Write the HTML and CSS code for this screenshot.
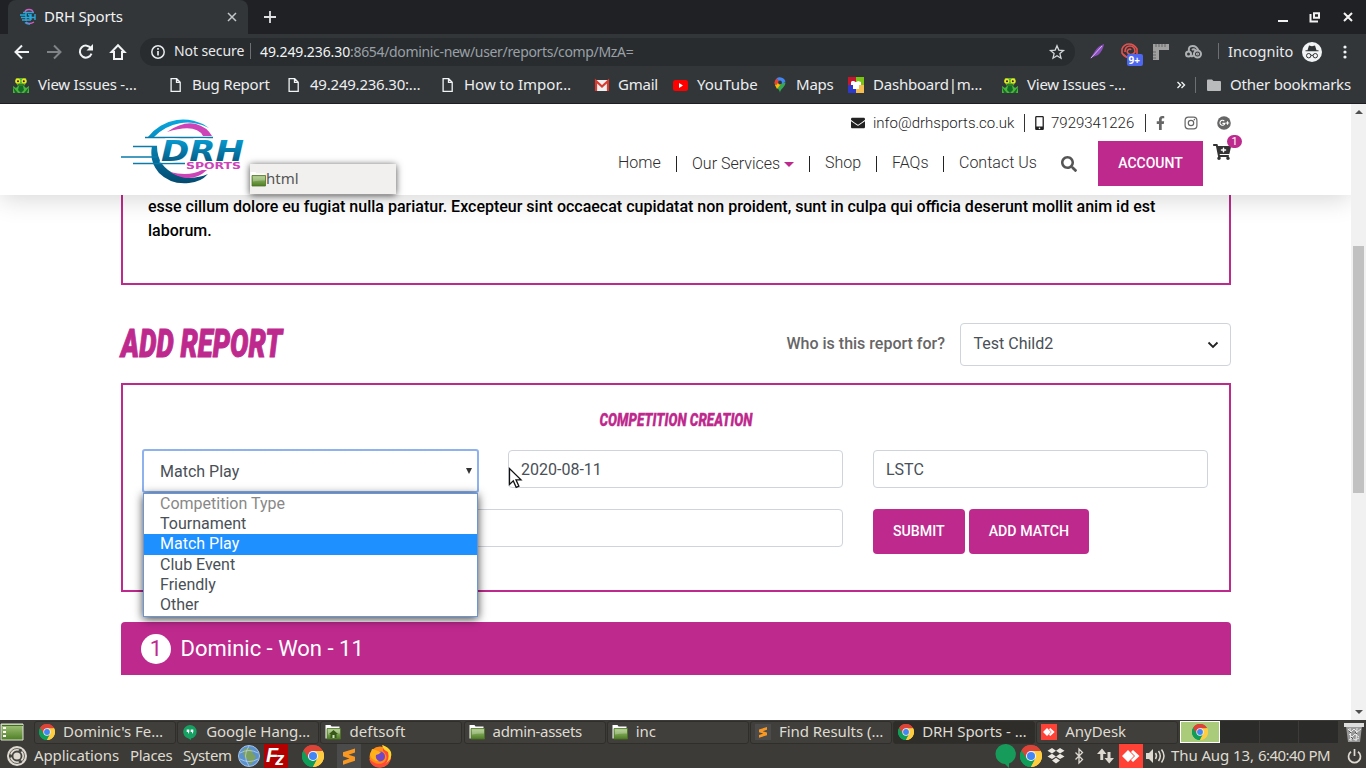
FILE: index.html
```html
<!DOCTYPE html>
<html lang="en">
<head>
<meta charset="utf-8">
<title>DRH Sports</title>
<link rel="stylesheet" href="styles.css">
</head>
<body>
<svg class="defs" width="0" height="0">
  <defs>
    <linearGradient id="blue" x1="0" y1="0" x2="0" y2="1"><stop offset="0" stop-color="#08a8e0"/><stop offset="1" stop-color="#05496f"/></linearGradient>
    <linearGradient id="green" x1="0" y1="0" x2="0" y2="1"><stop offset="0" stop-color="#a5c77c"/><stop offset="1" stop-color="#4e7d25"/></linearGradient>
  </defs>
  <symbol id="chrome" viewBox="0 0 24 24">
    <path fill="#db4437" d="M12 12 1.6 6A12 12 0 0 1 22.4 6Z"/>
    <path fill="#0f9d58" d="M12 12v12A12 12 0 0 1 1.6 6Z"/>
    <path fill="#ffcd40" d="M12 12 22.4 6A12 12 0 0 1 12 24Z"/>
    <path fill="#db4437" d="M12 6.5h10.6A12 12 0 0 0 1.6 6l5.6 9.2Z"/>
    <path fill="#0f9d58" d="M1.6 6 7.2 15l9.6 0L12 24A12 12 0 0 1 1.6 6Z"/>
    <path fill="#ffcd40" d="M12 6.5h10.7A12 12 0 0 1 12 24l4.8-9Z"/>
    <circle cx="12" cy="12" r="5.5" fill="#f4f4f4"/><circle cx="12" cy="12" r="4.4" fill="#4285f4"/>
  </symbol>
  <symbol id="page" viewBox="0 0 16 16"><path d="M4.100 1.700h5.600l3.500 3.500v9.100H4.100ZM9.500 1.900v3.500h3.500" fill="none" stroke="#f1f3f4" stroke-width="1.300"/></symbol>
  <symbol id="bug" viewBox="0 0 16 16">
    <path fill="#4bb43c" d="M3 1h10l1 4-3 4 2 2 3-2v7H0V9l3 2 2-2-3-4Z"/><path fill="#146b25" d="m0 10 5 6H2Zm16 0-5 6h3ZM6 9l4 0 1 4-3 3-3-3Z"/>
    <circle cx="4.800" cy="4" r="2.500" fill="#ffe21a"/><circle cx="11" cy="4" r="2.500" fill="#ffe21a"/><circle cx="5" cy="4.200" r="1" fill="#222"/><circle cx="10.800" cy="4.200" r="1" fill="#222"/><path d="M5 8h6" stroke="#1e4316"/>
  </symbol>
  <symbol id="folder" viewBox="0 0 16 16"><path fill="#fff" d="M.5 1h5l1 1.500h8v12H.5Z"/><path fill="url(#green)" stroke="#4c7427" stroke-width=".8" d="M2 4.500h13.500v10.500H2Z"/><path d="M3 5.500h12v4q-5-.5-12 1Z" fill="#fff" opacity=".25"/></symbol>
  <symbol id="sublime" viewBox="0 0 16 16"><path fill="#4b4b4b" d="M0 0h16v16H0Z"/><path fill="#f89822" d="m4 5.500 8-2.500v2.700L7.700 7.200l4.300 1.300v2.700l-8 2.600v-2.700l4.300-1.500L4 8.200Z"/></symbol>
  <symbol id="anydesk" viewBox="0 0 24 24"><path fill="#ff4136" d="M0 0h24v24H0Z"/><path fill="#fff" d="m9 6 6 6-6 6-6-6Zm5 0 6.500 6L14 18l-2-2 4-4-4-4Z"/></symbol>
</svg>

<div class="tabstrip">
  <div class="tab">
    <svg width="16" height="16" viewBox="0 0 16 16"><path d="M5 4q0-3.500 4-3.500T13 4M6 13q3 3 8 0" fill="none" stroke="#d05fc4" stroke-width="1.400"/><path d="M3 3.500h11M0 6h6M1 8.500h14M2 11h9M5 13.500q2 2 5 1.500M6 4v8M8 5.500l2 .5v4M11 5v6M15 5v6" stroke="#27a9db" stroke-width="1.400" fill="none"/></svg>
    <span class="tab-title">DRH Sports</span>
    <svg class="tab-x" width="10" height="10" viewBox="0 0 10 10"><path d="m1 1 8 8M9 1 1 9" stroke="#c4c7ca" stroke-width="1.500"/></svg>
  </div>
  <svg class="plus" width="14" height="14" viewBox="0 0 14 14"><path d="M7 1v12M1 7h12" stroke="#e0e1e3" stroke-width="1.800"/></svg>
  <svg class="wm" width="78" height="14" viewBox="0 0 78 14"><path d="M1 11h10M33.500 4v7.500H41M37 3.200h5v4.600h-5zM67 3l8 8M75 3l-8 8" fill="none" stroke="#f2f2f2" stroke-width="2"/></svg>
</div>

<div class="toolbar">
  <svg class="navicons" width="114" height="20" viewBox="0 0 114 20" fill="none" stroke="#f1f3f4" stroke-width="2">
    <path d="M16 10H3M9 3.500 2.500 10 9 16.500"/>
    <path stroke="#808387" d="M34 10h13M41 3.500l6.500 6.500-6.500 6.500"/>
    <path d="M78 6.500A6 6 0 1 0 78.500 11.700"/><path d="M73.500 8.600h6.500V2Z" fill="#f1f3f4" stroke="none"/>
    <path d="M98.500 10h2.500v7h8v-7h2.500L105 3.300Z"/>
  </svg>
  <div class="omnibox">
    <svg width="14" height="14" viewBox="0 0 14 14" fill="none" stroke="#e8eaed"><circle cx="7" cy="7" r="6.200" stroke-width="1.500"/><path d="M7 6v4.500M7 3v1.700" stroke-width="1.700"/></svg>
    <span class="secure">Not secure</span>
    <span class="url"><b>49.249.236.30</b>:8654/dominic-new/user/reports/comp/MzA=</span>
    <svg class="star" width="16" height="16" viewBox="0 0 16 16"><path d="m8 1.800 1.800 4.300 4.700.4-3.600 3.100 1.100 4.600L8 11.700l-4 2.500 1.100-4.600L1.500 6.500l4.700-.4Z" fill="none" stroke="#d5d7da" stroke-width="1.300"/></svg>
  </div>
  <svg class="ext" width="118" height="24" viewBox="0 0 118 24">
    <path d="M0 19 5 11q3-5 9-7-1 7-6 11l-5 2Z" fill="#8a4fbd"/><path d="m1 18 11-12" stroke="#d9b6ef"/>
    <g fill="none" stroke="#e3524f" stroke-width="1.600"><path d="M32 9q2-5 7-5 5 0 8 5v7q-3 2-6 2-6 0-9-5Z"/><path d="M35 12q0-6 5-6t5 6q-3 4-6 2t-1-4 3 0M33 14l5 4"/></g>
    <rect x="37" y="14" width="16" height="12" rx="2" fill="#4d67f0"/><text x="38.500" y="23.500" class="badge-text">9+</text>
    <path d="M63 4h16v6h-10v10h-6Z" fill="#a0a0a0"/><path d="M66 4v3m3-3v3m3-3v3m3-3v3M63 12h3m-3 3h3m-3 3h3" stroke="#666"/>
    <g fill="none" stroke="#aeb0b2" stroke-width="2"><path d="M99 11q-1-5 3.500-5t6 5"/><path d="M102 10q2-2 4 1"/><circle cx="98.500" cy="14" r="2.500"/><path d="M101 16q3 1 3-3"/><circle cx="107.500" cy="14" r="3.500"/><circle cx="107.500" cy="14" r=".6"/></g>
  </svg>
  <span class="incog">Incognito</span>
  <svg class="incogicon" width="20" height="20" viewBox="0 0 20 20"><circle cx="10" cy="10" r="10" fill="#f1f3f4"/><path d="M3.500 9.300h13V8.200h-2L13 3.500l-3 .7-3-.7-1.500 4.700h-2Z" fill="#303437"/><path d="M9 13.500q1-.8 2 0" stroke="#303437" fill="none"/><circle cx="6.700" cy="13.700" r="2.200" fill="none" stroke="#303437"/><circle cx="13.300" cy="13.700" r="2.200" fill="none" stroke="#303437"/></svg>
  <svg width="4" height="14" viewBox="0 0 4 14" fill="#f1f3f4"><circle cx="2" cy="2" r="1.600"/><circle cx="2" cy="7" r="1.600"/><circle cx="2" cy="12" r="1.600"/></svg>
</div>

<div class="bookmarks">
  <div class="bm"><svg><use href="#bug"/></svg><span>View Issues -…</span></div>
  <div class="bm"><svg><use href="#page"/></svg><span>Bug Report</span></div>
  <div class="bm"><svg><use href="#page"/></svg><span>49.249.236.30:…</span></div>
  <div class="bm"><svg><use href="#page"/></svg><span class="wide">How to Impor…</span></div>
  <div class="bm"><svg viewBox="0 0 16 16"><path fill="#eee" d="M2 3h14v11H2Z"/><path d="M3 14V4l6 5.500L15 4v10" fill="none" stroke="#d93a30" stroke-width="2.200"/></svg><span>Gmail</span></div>
  <div class="bm"><svg viewBox="0 0 16 16"><rect x="1" y="3" width="15" height="11" rx="2.500" fill="#f00"/><path d="m7 6 4 2.500L7 11Z" fill="#fff"/></svg><span class="wide">YouTube</span></div>
  <div class="bm"><svg viewBox="0 0 16 16"><path fill="#34a853" d="M9 16c0-4-5.500-6-5.500-10.500h11C14.500 10 9 12 9 16Z"/><path fill="#fbbc04" d="m4 8 4-4 2 3-4 5Z"/><path fill="#ea4335" d="M3.500 6q0-3 2-4.500L8.500 4 5 8.500Z"/><path fill="#4285f4" d="M5.500 1.500Q7 0 9 .2q4.200.3 5.500 4.300L11 7 8 4Z"/><circle cx="9" cy="5.500" r="1.900" fill="#303437"/></svg><span>Maps</span></div>
  <div class="bm"><svg viewBox="0 0 16 16"><path fill="#c5162b" d="M0 0h8v8H0Z"/><path fill="#7bc315" d="M8 0h8v8H8Z"/><path fill="#2d39ca" d="M0 8h8v8H0Z"/><path fill="#f5bd52" d="M8 8h8v8H8Z"/><path fill="#fff" d="m4 4 2 0q2 2 4 0l3 1 0 3-2 0v4H5V8L3 8V5Z"/></svg><span>Dashboard|m…</span></div>
  <div class="bm"><svg><use href="#bug"/></svg><span>View Issues -…</span></div>
  <svg class="more" width="9" height="8" viewBox="0 0 9 8"><path d="m.5 1 3 3-3 3M4.500 1l3 3-3 3" fill="none" stroke="#f1f3f4" stroke-width="1.400"/></svg>
  <div class="other"><svg viewBox="0 0 16 16"><path d="M0 3.500q0-1 1-1h4l1.500 1.500H13q1 0 1 1v8q0 1-1 1H1q-1 0-1-1Z" fill="#b9babb"/></svg><span>Other bookmarks</span></div>
</div>

<div class="viewport">
  <div class="site">
    <header class="header">
      <svg class="logo" width="126" height="68" viewBox="0 0 126 68">
        <path d="M27 20A44 44 0 0 1 88 11A46 46 0 0 0 33 20ZM31 29Q28 45 38 56Q50 68 68 66Q80 65 87 57Q70 64 56 58Q36 50 36 29Z" fill="url(#blue)"/>
        <path d="M46 15Q62 4 75 7Q86 10 91 19H82Q75 6 46 15ZM49 55Q68 60 81 53H86Q70 68 49 55Z" fill="#cc43b8"/>
        <path d="M24 20.500h68M12 29.500h24M0 40h36M12 46.500h52" stroke="#0b7ba9" stroke-width="1.600"/>
        <text class="drh" x="40" y="44" textLength="83" lengthAdjust="spacingAndGlyphs" fill="url(#blue)">DRH</text>
        <text class="sports" x="65" y="52.300" textLength="55" lengthAdjust="spacingAndGlyphs">SPORTS</text>
      </svg>
      <div class="head-right">
        <div class="contact">
          <svg class="env" viewBox="0 0 512 512"><path d="M502.300 190.800c3.900-3.100 9.700-.2 9.700 4.700V400c0 26.500-21.500 48-48 48H48c-26.500 0-48-21.500-48-48V195.600c0-5 5.700-7.800 9.700-4.700 22.400 17.400 52.100 39.500 154.100 113.600 21.100 15.400 56.700 47.800 92.200 47.600 35.700.3 72-32.800 92.300-47.600 102-74.100 131.600-96.300 154-113.700zM256 320c23.200.4 56.600-29.200 73.400-41.400 132.700-96.300 142.800-104.700 173.400-128.700 5.800-4.500 9.200-11.500 9.200-18.900v-19c0-26.500-21.500-48-48-48H48c-26.500 0-48 21.500-48 48v19c0 7.400 3.400 14.300 9.200 18.900 30.600 23.900 40.700 32.400 173.400 128.700 16.800 12.200 50.200 41.800 73.400 41.400z"/></svg>
          <span class="mail">info@drhsports.co.uk</span>
          <i class="sep"></i>
          <svg class="mob" viewBox="0 0 320 512"><path d="M272 0H48C21.500 0 0 21.500 0 48v416c0 26.500 21.500 48 48 48h224c26.500 0 48-21.500 48-48V48c0-26.500-21.500-48-48-48zM160 480c-17.700 0-32-14.300-32-32s14.300-32 32-32 32 14.300 32 32-14.300 32-32 32zm112-108c0 6.600-5.400 12-12 12H60c-6.600 0-12-5.400-12-12V60c0-6.600 5.400-12 12-12h200c6.600 0 12 5.400 12 12v312z"/></svg>
          <span class="phone">7929341226</span>
          <i class="sep"></i>
          <svg class="fb" viewBox="0 0 320 512"><path d="M279.140 288l14.220-92.660h-88.910v-60.130c0-25.350 12.420-50.060 52.240-50.060h40.420V6.260S260.430 0 225.360 0c-73.220 0-121.080 44.380-121.080 124.720v70.620H22.890V288h81.390v224h100.170V288z"/></svg>
          <svg class="ig" viewBox="0 0 14 14"><rect x="1.100" y="1.100" width="11.800" height="11.800" rx="3.300" fill="none" stroke="#666" stroke-width="1.200"/><circle cx="7" cy="7" r="2.700" fill="none" stroke="#666" stroke-width="1.200"/><circle cx="10.400" cy="3.600" r=".8"/></svg>
          <svg class="gp" viewBox="0 0 14 14"><circle cx="7" cy="7" r="6.800"/><path d="M7.300 5.100a2.500 2.500 0 1 0 .6 2.300H5.400M8.800 7h3.400M10.500 5.300v3.400" fill="none" stroke="#fff" stroke-width="1.100"/></svg>
        </div>
        <nav class="nav">
          <span class="n1">Home</span><span class="n2">Our Services<i class="caret"></i></span><span class="n3">Shop</span><span class="n4">FAQs</span><span class="n5">Contact Us</span>
          <svg class="search" viewBox="0 0 512 512"><path d="M505 442.700L405.300 343c-4.500-4.500-10.600-7-17-7H372c27.600-35.300 44-79.700 44-128C416 93.100 322.900 0 208 0S0 93.100 0 208s93.100 208 208 208c48.300 0 92.700-16.400 128-44v16.300c0 6.400 2.500 12.500 7 17l99.700 99.700c9.400 9.400 24.600 9.400 33.900 0l28.300-28.300c9.400-9.400 9.400-24.600.1-34zM208 336c-70.700 0-128-57.200-128-128 0-70.700 57.200-128 128-128 70.700 0 128 57.200 128 128 0 70.700-57.200 128-128 128z"/></svg>
          <a class="account">ACCOUNT</a>
          <div class="cart"><svg viewBox="0 0 576 512"><path d="M504.717 320H211.572l6.545 32h268.418c15.401 0 26.816 14.301 23.403 29.319l-5.517 24.276C523.112 414.668 536 433.828 536 456c0 31.202-25.519 56.444-56.824 55.994-29.823-.429-54.350-24.631-55.155-54.447-.44-16.287 6.085-31.049 16.803-41.548H231.176C241.553 426.165 248 440.326 248 456c0 31.813-26.528 57.431-58.670 55.938-28.540-1.325-51.751-24.385-53.251-52.917-1.158-22.034 10.436-41.455 28.051-51.586L93.883 64H24C10.745 64 0 53.255 0 40V24C0 10.745 10.745 0 24 0h102.529c11.401 0 21.228 8.021 23.513 19.190L159.208 64H551.990c15.401 0 26.816 14.301 23.403 29.319l-47.273 208C525.637 312.246 515.923 320 504.717 320zM408 168h-48v-40c0-8.837-7.163-16-16-16h-16c-8.837 0-16 7.163-16 16v40h-48c-8.837 0-16 7.163-16 16v16c0 8.837 7.163 16 16 16h48v40c0 8.837 7.163 16 16 16h16c8.837 0 16-7.163 16-16v-40h48c8.837 0 16-7.163 16-16v-16c0-8.837-7.163-16-16-16z"/></svg><b>1</b></div>
        </nav>
      </div>
      <div class="drag"><svg width="16" height="16"><use href="#folder"/></svg><span>html</span></div>
    </header>
    <main class="main">
      <section class="intro">esse cillum dolore eu fugiat nulla pariatur. Excepteur sint occaecat cupidatat non proident, sunt in culpa qui officia deserunt mollit anim id est<br>laborum.</section>
      <div class="title-row">
        <h2><svg width="170" height="44" viewBox="0 0 170 44"><text class="bang" x="1" y="34" font-size="39" textLength="161" lengthAdjust="spacingAndGlyphs">ADD REPORT</text></svg></h2>
        <div class="who"><label>Who is this report for?</label>
          <div class="child">Test Child2<svg width="12" height="8" viewBox="0 0 12 8"><path d="m1.500 1.500 4.500 4.500 4.500-4.500" fill="none" stroke="#222" stroke-width="1.800"/></svg></div></div>
      </div>
      <section class="form">
        <h3><svg width="160" height="24" viewBox="0 0 160 24"><text class="bang small" x="3.500" y="17" font-size="18.500" textLength="153" lengthAdjust="spacingAndGlyphs">COMPETITION CREATION</text></svg></h3>
        <div class="grid">
          <div class="select"><div class="select-box">Match Play<i></i></div>
            <ul class="menu"><li class="dim">Competition Type</li><li>Tournament</li><li class="on">Match Play</li><li>Club Event</li><li>Friendly</li><li>Other</li></ul>
          </div>
          <div class="input">2020-08-11<svg class="cursor" width="14" height="22" viewBox="0 0 14 22"><path d="M1.500 1.500v16l3.800-3.600 2.900 6.400 2.700-1.200-2.900-6.200h5Z" fill="#fff" stroke="#111" stroke-width="1.300"/></svg></div>
          <div class="input">LSTC</div>
          <div class="input double"></div>
          <div class="buttons"><a>SUBMIT</a><a>ADD MATCH</a></div>
        </div>
      </section>
      <div class="result"><b>1</b><span>Dominic - Won - 11</span></div>
    </main>
  </div>
  <div class="scroll"><i class="up"></i><div class="thumb"></div><i class="down"></i></div>
</div>

<div class="taskbar">
  <svg class="desk" width="24" height="20" viewBox="0 0 24 20"><path d="M1 2h22v16H1Z" fill="url(#green)" stroke="#dfe3d8"/><path d="M2 3.500h21" stroke="#46682a"/><path d="M3 6h3M3 10h3M3 14h3" stroke="#fff" stroke-width="2"/></svg>
  <div class="task"><svg><use href="#chrome"/></svg><span>Dominic's Fe…</span></div>
  <div class="task"><svg viewBox="0 0 16 16"><path d="M8 1a6.800 6.800 0 0 1 1 13.500V16l-3-1.700A6.800 6.800 0 0 1 8 1Z" fill="#16a163"/><path d="M4.700 5.500h2.600V8L6 10V8H4.700Zm4 0h2.600V8L10 10V8H8.700Z" fill="#fff"/></svg><span>Google Hang…</span></div>
  <div class="task"><svg viewBox="0 0 16 16"><use href="#folder"/><path d="m8.500 6 4.500 4h-1.500v4h-6v-4H4Z" fill="#365917"/><path d="M7.500 11h2v3h-2Z" fill="#cfe0bd"/></svg><span class="wide">deftsoft</span></div>
  <div class="task"><svg><use href="#folder"/></svg><span class="tight">admin-assets</span></div>
  <div class="task"><svg><use href="#folder"/></svg><span>inc</span></div>
  <div class="task"><svg><use href="#sublime"/></svg><span>Find Results (…</span></div>
  <div class="task active"><svg><use href="#chrome"/></svg><span>DRH Sports - …</span></div>
  <div class="task"><svg><use href="#anydesk"/></svg><span>AnyDesk</span></div>
  <div class="pager"><div class="cur"><svg width="16" height="16"><use href="#chrome"/></svg></div><div></div><div></div><div></div></div>
  <svg class="trash" width="22" height="22" viewBox="0 0 22 22"><path d="m3 5 2 16h12l2-16Z" fill="#999"/><path d="M1 2h20v4H1Z" fill="#ddd"/><path d="m5 8 3 3 3-3 3 3 4-3M6 13l3 3 3-3 4 3M6 19l3-2 3 2 4-2M7 7l1 13m6-13-1 13" stroke="#e8e8e8" fill="none"/><path d="m6 10 2 2m4-1 2 2m-6 3 2 2" stroke="#555"/></svg>
</div>

<div class="panel">
  <svg class="ub" width="20" height="20" viewBox="0 0 20 20"><circle cx="10" cy="10" r="10" fill="#dedad2"/><circle cx="10" cy="10" r="4.500" fill="none" stroke="#45433f" stroke-width="1.800"/><circle cx="10" cy="10" r="7.500" fill="none" stroke="#69665f"/><g fill="#45433f"><circle cx="3.500" cy="10" r="1.700"/><circle cx="13.300" cy="4.400" r="1.700"/><circle cx="13.300" cy="15.600" r="1.700"/></g></svg>
  <span class="m1">Applications</span><span class="m2">Places</span><span class="m3">System</span>
  <svg class="globe" width="22" height="22" viewBox="0 0 22 22"><circle cx="11" cy="11" r="10.500" fill="#5a91cf" stroke="#a7c4e5"/><path d="m6 4 4-1 4 2 1 4 3 2-2 5-4 4-2-5-4-3-1-5Z" fill="#7ba05f"/><path d="M2 8q9-5 18 0M2 14q9 5 18 0M11 1q-7 10 0 20" fill="none" stroke="#c4d7e9" stroke-width=".7"/></svg>
  <svg class="fz" width="24" height="24" viewBox="0 0 24 24"><path d="M0 0h24v24H0Z" fill="#b30000"/><text x="2" y="18" class="fzt">F<tspan dx="-3" dy="3" font-size="18">z</tspan></text></svg>
  <svg class="c1" width="22" height="22"><use href="#chrome"/></svg>
  <svg class="sb" width="24" height="24"><use href="#sublime"/></svg>
  <svg class="ff" width="24" height="24" viewBox="0 0 24 24"><circle cx="12" cy="13" r="10.500" fill="#ff8a16"/><path d="M15 1q9 6 8 14-3 8-11 8.500-9 0-11-9Q8 22 15 19q7-5 0-12Z" fill="#ff4a3a"/><path d="M14 1q1 5 6 7 2 8-3 12 8-5 6-12-2-5-9-7Z" fill="#ffd52b"/><circle cx="12" cy="12.500" r="5" fill="#7147c6"/><path d="M4 5q4 1 6 2l3 1q-2 3-5 3-1 4 3 6-7 0-9-6Z" fill="#ffb11c"/></svg>
  <div class="tray">
    <svg class="hang" width="20" height="24" viewBox="0 0 20 24"><path d="M10 0a10 10 0 0 1 3 19.500V24q-2-2-4-4A10 10 0 0 1 10 0Z" fill="#169b5a"/></svg>
    <svg class="c2" width="22" height="22"><use href="#chrome"/></svg>
    <svg class="db" width="18" height="16" viewBox="0 0 18 16" fill="#e9e6df"><path d="m5 0 4 2.700-4 2.700-4.500-2.700Zm8 0 4.500 2.700-4.500 2.700-4-2.700ZM5 5.700 9 8.400l-4 2.700L.5 8.400Zm8 0 4.500 2.700-4.500 2.700-4-2.700ZM9 9.800l4 2.600L9 15.500l-4-3.100Z"/></svg>
    <svg class="bt" width="10" height="18" viewBox="0 0 10 18"><path d="m1.500 5.500 7 7L5 16V2l3.500 3.500-7 7" fill="none" stroke="#dedad2" stroke-width="1.300"/></svg>
    <svg class="net" width="17" height="16" viewBox="0 0 17 16" fill="#dedad2"><path d="M3.300 12V6H0l5-5.500L9.500 6H6.200v6ZM10.500 4v6H7.500l4.700 5.500L17 10h-3.500V4Z"/></svg>
    <svg class="ad" width="24" height="24"><use href="#anydesk"/></svg>
    <svg class="vol" width="20" height="16" viewBox="0 0 20 16"><path d="M0 5h3l4-4v14l-4-4H0Z" fill="#dedad2"/><path d="M9.500 5q2 3 0 6M12.500 3q3.500 5 0 10M15.500 1.500q5 6.500 0 13" fill="none" stroke="#dedad2" stroke-width="1.500"/></svg>
    <span class="date">Thu Aug 13,</span><span class="clock">6:40:40 PM</span>
    <svg class="pw" width="15" height="15" viewBox="0 0 15 15"><path d="M4 2.800a6 6 0 1 0 7 0M7.500 0v7" fill="none" stroke="#dedad2" stroke-width="1.700"/></svg>
  </div>
</div>
</body>
</html>
```

FILE: styles.css
```css
* { box-sizing: border-box; }
body { margin: 0; width: 1366px; height: 768px; overflow: hidden; display: flex; flex-direction: column; font-family: Roboto, "Liberation Sans", sans-serif; background: #fff; }
svg { flex: none; display: block; overflow: visible; }
.defs { height: 0; }
span { white-space: nowrap; }

/* browser chrome */
.tabstrip, .toolbar, .bookmarks, .taskbar, .panel, .drag { font-family: "Noto Sans", sans-serif; font-size: 15px; }
.tabstrip span, .toolbar span, .bookmarks span, .taskbar span, .panel span, .drag span { margin-top: -2px; }
.tabstrip { height: 34px; flex: none; background: #202124; display: flex; align-items: center; padding-left: 8px; }
.tab { width: 240px; height: 34px; background: #323639; border-radius: 8px 8px 0 0; display: flex; align-items: center; padding-left: 12px; color: #f1f3f4; }
.tab-title { margin-left: 8px; width: 183px; letter-spacing: -.2px; }
.plus { margin-left: 15px; }
.wm { margin-left: auto; margin-right: 11px; }
.toolbar { height: 36px; flex: none; background: #323639; display: flex; align-items: center; color: #e8eaed; }
.navicons { margin-left: 13px; }
.omnibox { margin-left: 13px; width: 935px; height: 28px; border-radius: 14px; background: #282c2f; display: flex; align-items: center; padding-left: 11px; }
.secure { margin-left: 9px; width: 77px; border-right: 1px solid #6d7073; line-height: 16px; font-size: 14px; letter-spacing: -.1px; }
.url { margin-left: 9px; color: #9aa0a6; font-size: 14px; letter-spacing: -.33px; }
.url b { font-weight: 400; color: #f1f3f4; letter-spacing: -.1px; }
.star { margin-left: auto; margin-right: 10px; }
.ext { margin-left: 15px; }
.badge-text { font: 700 10px "Noto Sans", sans-serif; fill: #fff; }
.incog { margin-left: 10px; border-left: 1px solid #6d7073; line-height: 16px; padding-left: 9px; width: 84px; font-size: 14.5px; }
.incogicon { margin-right: 21px; }
.bookmarks { height: 34px; flex: none; background: #323639; border-bottom: 1px solid #1f1f21; display: grid; grid-template-columns: 154px 118px 154px 154px 79px 99px 77px 154px 175px 18px 1fr; align-items: center; padding: 0 0 4px 13px; color: #eceef0; }
.bookmarks span { letter-spacing: -.22px; }
.bookmarks .wide { letter-spacing: 0; }
.bm { display: flex; align-items: center; gap: 9px; }
.bm svg, .other svg, .task svg { width: 16px; height: 16px; }
.other { border-left: 1px solid #6d7073; height: 16px; display: flex; align-items: center; gap: 7px; padding-left: 11px; }

/* website */
.viewport { height: 616px; flex: none; display: flex; }
.site { width: 1351px; display: flex; flex-direction: column; overflow: hidden; }
.header { height: 91px; flex: none; display: flex; justify-content: space-between; padding: 0 120px 0 121px; position: relative; z-index: 2; background: #fff; box-shadow: 0 4px 24px rgba(0,0,0,.16); }
.logo { margin-top: 13px; }
.drh { font: italic 700 28px "DejaVu Sans", sans-serif; stroke: #fff; stroke-width: 3px; paint-order: stroke; }
.sports { font: 700 9px "DejaVu Sans", sans-serif; fill: #cc43b8; }
.head-right { width: 613px; }
.contact { height: 37px; display: flex; align-items: center; padding-left: 233px; font-weight: 300; font-size: 15px; color: #222; fill: #666; }
.env { width: 14px; height: 14px; fill: #222; }
.mail { margin-left: 8px; width: 151px; }
.sep { width: 1px; height: 18px; background: #333; }
.mob { width: 9px; height: 14px; margin-left: 10px; fill: #222; }
.phone { margin-left: 7px; width: 94px; }
.fb { width: 9px; height: 14px; margin-left: 10px; }
.ig { width: 14px; height: 14px; margin-left: 19px; }
.gp { width: 14px; height: 14px; margin-left: 19px; }
.nav { display: flex; height: 45px; align-items: center; font-weight: 300; font-size: 16px; color: #2c2c2c; }
.nav > span { height: 16px; line-height: 14px; border-right: 1px solid #222; }
.n1 { width: 59px; }
.nav > .n2 { padding-left: 15px; width: 133px; line-height: 16px; }
.caret { display: inline-block; border: 5px solid transparent; border-top-color: #be298d; border-bottom: 0; margin-left: 4px; vertical-align: 2px; }
.n3 { padding-left: 15px; width: 67px; }
.n4 { padding-left: 15px; width: 67px; }
.nav > .n5 { padding-left: 15px; width: 117px; border: 0; }
.search { width: 16px; height: 16px; fill: #555; }
.account { margin-left: 21px; width: 105px; height: 45px; line-height: 44px; text-align: center; background: #be298d; color: #fff; font-weight: 500; font-size: 14px; }
.cart { position: relative; width: 18px; height: 16px; margin: -24px 0 0 10px; }
.cart svg { width: 18px; height: 16px; fill: #333; }
.cart b { position: absolute; left: 14px; top: -9px; width: 15px; height: 13px; border-radius: 7px; background: #be298d; color: #fff; font-size: 11px; line-height: 13px; font-weight: 400; text-align: center; }
.drag { position: absolute; left: 250px; top: 60px; width: 146px; height: 30px; background: #f1f0ee; box-shadow: 0 1px 7px rgba(0,0,0,.7); display: flex; align-items: center; color: #555; }
.main { padding: 0 120px 0 121px; }
.intro { height: 90px; border: 2px solid #be298d; border-top: 0; padding: 0 25px; font-size: 16px; line-height: 24px; font-weight: 500; color: #000; }
.title-row { height: 98px; padding-top: 38px; display: flex; justify-content: space-between; }
h2, h3 { margin: 0; }
.bang { font-family: Roboto, sans-serif; font-weight: 900; font-style: italic; fill: #be298d; stroke: #be298d; stroke-width: 1; }
.bang.small { stroke-width: .3; }
h2 svg { margin: 0 0 0 -1px; }
.who { display: flex; gap: 15px; }
.who label { line-height: 41px; font-size: 16px; font-weight: 500; color: #666; }
.child { width: 271px; height: 43px; border: 1px solid #ced4da; border-radius: 4px; padding: 0 11px 0 12.500px; display: flex; justify-content: space-between; line-height: 40px; color: #495057; }
.child svg { margin-top: 17px; }
.form { height: 209px; border: 2px solid #be298d; padding: 24px 20px 0; }
h3 { height: 41px; display: flex; justify-content: center; }
.grid { display: grid; grid-template-columns: 335px 335px 335px; column-gap: 30px; row-gap: 21px; }
.input { height: 38px; border: 1px solid #ced4da; border-radius: 4px; padding: 0 12px; line-height: 37px; color: #495057; position: relative; }
.double { grid-column: span 2; }
.cursor { position: absolute; left: -1px; top: 16px; }
.select { position: relative; z-index: 3; height: 38px; }
.select-box { width: 337px; height: 44px; margin: -1px 0 0 -1px; border: 2px solid #8db2ee; border-radius: 3px; background: #fff; padding: 0 5px 0 16px; line-height: 41px; color: #495057; display: flex; justify-content: space-between; align-items: center; }
.select-box i { border: 3px solid transparent; border-top: 6px solid #333; border-bottom: 0; }
.menu { position: absolute; left: 0; top: 43px; width: 335px; height: 124px; margin: 0; padding: 0; list-style: none; background: #fff; border: 1px solid #6d95d0; box-shadow: 0 2px 9px rgba(0,0,0,.75); color: #495057; }
.menu li { height: 20px; line-height: 20px; padding-left: 16px; }
.menu .dim { color: #888; }
.menu .on { height: 21px; background: #1e90ff; color: #fff; }
.buttons { display: flex; gap: 4px; }
.buttons a { height: 45px; line-height: 44px; padding: 0 20px; border-radius: 4px; background: #be298d; color: #fff; font-size: 14.200px; font-weight: 500; }
.result { margin-top: 30px; height: 53px; background: #be298d; border-radius: 4px 4px 0 0; padding-left: 20px; display: flex; align-items: center; color: #fff; font-size: 22px; }
.result b { width: 30px; height: 30px; border-radius: 50%; background: #fff; color: #be298d; font-weight: 400; text-align: center; line-height: 30px; margin-right: 9.500px; }
.scroll { width: 15px; background: #f1f1f1; display: flex; flex-direction: column; align-items: center; }
.scroll i { border: 4px solid transparent; }
.scroll .up { border-top: 0; border-bottom-color: #505050; margin-top: 6px; }
.scroll .thumb { width: 11px; height: 247px; background: #c1c1c1; margin: 132px 0 0 0; }
.scroll .down { border-bottom: 0; border-top-color: #505050; margin: auto 0 6px; }

/* desktop panels */
.taskbar { height: 24px; flex: none; background: #3c3b37; color: #dfdbd2; display: flex; align-items: center; }
.desk { margin-right: 10px; }
.task { width: 142px; margin-right: 1.200px; height: 23px; border: 1px solid #2f2e2b; border-radius: 3px; background: #403f3b; display: flex; align-items: center; padding-left: 4px; }
.task span { margin-left: 8px; letter-spacing: -.05px; }
.task .wide { letter-spacing: .15px; }
.task .tight { letter-spacing: -.35px; }
.task.active { background: #2e2d2a; }
.pager { display: flex; margin-left: auto; width: 159px; height: 22px; background: #2b2b29; }
.pager div { width: 40px; border-right: 1px solid #3c3b37; display: flex; align-items: center; justify-content: center; }
.pager .cur { background: #aacb7a; border: 1px solid #fff; }
.trash { margin: 0 1px 0 4px; }
.panel { height: 24px; flex: none; background: #3c3b37; color: #dfdbd2; display: flex; align-items: center; }
.ub { margin-left: 7px; }
.m1 { margin-left: 7px; width: 96px; letter-spacing: -.1px; }
.m2 { width: 53px; letter-spacing: -.3px; }
.m3 { width: 55px; letter-spacing: -.4px; }
.fz { margin-left: 4px; }
.fzt { font: italic 900 20px "Liberation Sans", sans-serif; fill: #fff; }
.c1 { margin-left: 14px; }
.sb { margin-left: 13px; }
.ff { margin-left: 7px; }
.tray { margin-left: auto; display: flex; align-items: center; }
.c2 { margin-left: 4px; }
.db { margin-left: 5px; }
.bt { margin-left: 9px; }
.net { margin-left: 13px; }
.ad { margin-left: 5px; }
.vol { margin-left: 3px; }
.date { margin-left: 5px; width: 87px; letter-spacing: -.1px; }
.panel .clock { width: 73px; letter-spacing: -.55px; }
.pw { margin: 0 4px 0 16px; }
```
